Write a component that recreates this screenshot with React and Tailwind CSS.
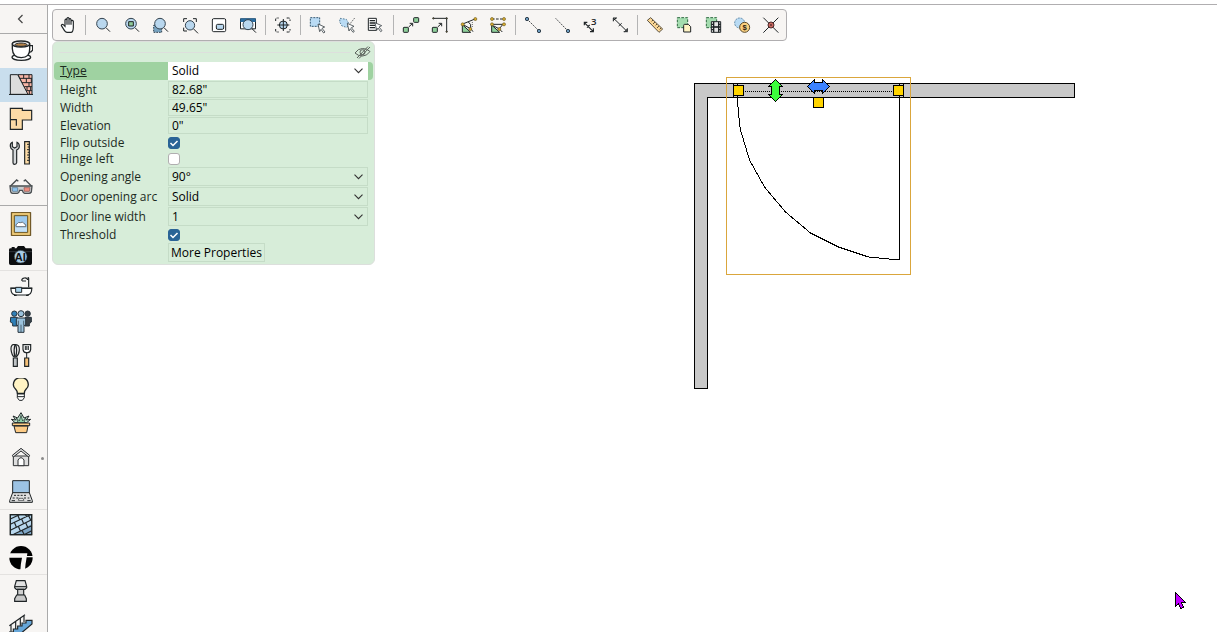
import React from "react";

const INK = "#1f2426";

/* ---------- sidebar icons ---------- */

const sideGroups = [
  [
    {
      name: "Basic", box: "27 117 72 72",
      art: (
        <g stroke={INK} strokeWidth="4" fill="#fff">
          <ellipse cx="64" cy="172" rx="28" ry="9" />
          <path d="M88 137h10v13q-3 7-13 7" fill="none" />
          <path d="M37 132v14q1 27 27 27t25-27v-14z" />
          <ellipse cx="63" cy="132" rx="26" ry="9" />
          <ellipse cx="63" cy="134" rx="18" ry="5" fill="#b5834a" strokeWidth="3" />
        </g>
      ),
    },
    {
      name: "Walls", box: "27 219 72 72", active: true,
      art: (
        <g stroke={INK} strokeWidth="3">
          <path d="M54 224h42v59H82z" fill="#f7b5a6" />
          <path d="M31 224h22l31 59H31z" fill="#dcdcdc" />
          <path d="M59 235h37M66 248h30M73 260h23M79 272h17M71 224v11M87 224v11M79 235v13M94 235v13M87 248v12M81 260v12M92 260v12M88 272v11" fill="none" />
          <path d="M27 283.500h72" />
        </g>
      ),
    },
    {
      name: "Rooms", box: "27 321 72 72",
      art: (
        <g stroke={INK} strokeWidth="3.500" fill="#fddba6">
          <path d="M31 325h36v6h28v29H67v28H31z" />
          <path d="M31 359h18v18" fill="none" />
        </g>
      ),
    },
    {
      name: "Tools", box: "27 423 72 72",
      art: (
        <g stroke={INK} strokeWidth="3.500">
          <path d="M37 427q-7 3-6 12 1 8 8 11v38q0 5 5 5t6-5v-38q8-3 8-11 0-9-7-12v13l-7 4-7-4z" fill="#d5d8da" />
          <path d="M74 425h14v67H74z" fill="#fddba6" />
          <path d="M81 433h7M83 441h5M81 449h7M83 457h5M81 465h7M83 473h5M81 481h7" strokeWidth="3" />
        </g>
      ),
    },
    {
      name: "3D view", box: "27 525 72 72",
      art: (
        <g stroke="#4a4f52" strokeWidth="4" fill="none">
          <path d="M31 559l19-19 5 4M95 559l-19-19-5 4" />
          <path d="M30 558h66l-2 18q-3 4-7 4H74q-5-1-7-9h-8q-2 8-7 9H38q-5 0-6-5z" fill="#c9ccce" />
          <path d="M36 563h17v11H38z" fill="#8fc4ef" stroke="#4f7089" strokeWidth="2" />
          <path d="M72 563h18l-2 11H73z" fill="#ef8d80" stroke="#89504a" strokeWidth="2" />
        </g>
      ),
    },
  ],
  [
    {
      name: "Pictures", box: "27 36 72 72",
      art: (
        <g>
          <path d="M34 37h58v70H34z" fill="#d9b05a" stroke="#5d4515" strokeWidth="3" />
          <path d="M39 42h48v60H39z" fill="none" stroke="#f2d58b" strokeWidth="3" />
          <path d="M43 47h40v50H43z" fill="#9cc9ee" stroke="#6d551f" strokeWidth="3" />
          <path d="M45 82h36v13H45z" fill="#c5e1f6" />
          <path d="M49 80q-4-7 3-9 3-6 9-3 8-5 11 3 8 2 5 9z" fill="#fff" stroke="#4d565e" strokeWidth="2.500" />
        </g>
      ),
    },
    {
      name: "AI render", box: "27 129 72 72", short: true,
      art: (
        <g>
          <path d="M27 149q0-4 5-4h3v-4h9v4h5l5-7h18l5 7h15q4 0 4 4v41q0 5-5 5H32q-5 0-5-5z" fill="#0c0e10" />
          <path d="M27 155h69" stroke="#44494d" strokeWidth="2" />
          <circle cx="62" cy="170" r="19" fill="#a9cde6" stroke="#3a4249" strokeWidth="2" />
          <text x="61" y="182" textAnchor="middle" fontSize="33" fontWeight="700" fill="#101214" className="font-['Liberation_Sans',sans-serif]">AI</text>
        </g>
      ),
    },
  ],
  [
    {
      name: "Bathroom", box: "27 228 72 72",
      art: (
        <g stroke={INK} strokeWidth="3.500" fill="none">
          <path d="M65 242q0-7 8-8 9-1 10 6M66 243h12M86 262V236q0-4-3-3" />
          <path d="M33 265h62v5q-1 14-14 15H47q-13-1-14-15z" fill="#fff" />
          <path d="M31 264.500h66M42 286h8M78 286h8" />
          <path d="M47 262h18v15H47z" fill="#a9d3ea" strokeWidth="3" />
        </g>
      ),
    },
    {
      name: "People", box: "27 330 72 72",
      art: (
        <g strokeWidth="3" stroke="#27333c">
          <circle cx="43" cy="341" r="8" fill="#2f80b8" />
          <path d="M32 352h20v26H38v-8l-7-4z" fill="#2f80b8" />
          <circle cx="83" cy="341" r="8" fill="#3a4147" />
          <path d="M75 352h19v14l-6 5v7H75z" fill="#3a4147" />
          <circle cx="63" cy="341" r="9" fill="#9bc2dc" />
          <path d="M52 354h22l3 3v19h-5v21H54v-21h-5v-19z" fill="#9bc2dc" />
          <path d="M63 374v22M55 362v14M71 362v14" strokeWidth="2" />
        </g>
      ),
    },
    {
      name: "Kitchen", box: "27 432 72 72",
      art: (
        <g stroke={INK} strokeWidth="3.500" fill="none">
          <path d="M46 434q-14-3-13 14 2 18 10 23h5q9-7 10-20 1-18-12-17z" fill="#eceaea" />
          <path d="M45 434q-5 16-1 36M47 434q6 16 0 36" />
          <path d="M40 474h12v25H40z" fill="#bfc3c6" />
          <path d="M69 434h23v14q-1 9-9 10h-5q-8-1-9-10z" fill="#fff" />
          <path d="M76 438v12M80.500 438v12M85 438v12M80 459v15" strokeWidth="3" />
          <path d="M74 474h12v25H74z" fill="#f6c078" />
        </g>
      ),
    },
    {
      name: "Lighting", box: "27 534 72 72",
      art: (
        <g stroke={INK} strokeWidth="4" fill="#fff3c4">
          <path d="M52 580q0-7-5-12-7-7-7-14 1-20 23-21 21 1 22 21 0 7-7 14-5 5-5 12z" />
          <path d="M52 582h21v11l-6 8h-9l-6-8zM52 590h21" fill="#fff" strokeWidth="3" />
        </g>
      ),
    },
    {
      name: "Plants", box: "27 6 72 72",
      art: (
        <g stroke={INK} strokeWidth="3">
          <path d="M45 38L34 28l13 2-8-12 14 6 10-16 9 16 15-6-8 12 13-2-12 10z" fill="#c3e8d3" />
          <path d="M54 38l-5-14 9 9 5-17 5 17 9-9-5 14z" fill="#8ed0a8" strokeWidth="2" />
          <path d="M37 39h52v8H37zM42 48h42l-4 20H47z" fill="#fdcb85" />
        </g>
      ),
    },
    {
      name: "Building", box: "27 108 72 72", dot: true,
      art: (
        <g stroke="#2c2f31" strokeWidth="3" fill="#dedede">
          <path d="M40 138h46v29H40z" />
          <path d="M37 136l26-21 26 21-3 5-23-18-23 18z" />
          <path d="M54 167v-17q9-14 18 0v17z" fill="#fff" />
        </g>
      ),
    },
    {
      name: "Electronics", box: "27 210 72 72",
      art: (
        <g stroke={INK} strokeWidth="3">
          <path d="M38 212h50v38H38z" fill="#9cc3e4" />
          <path d="M38 248h50l9 24v5H29v-5z" fill="#dfdfdf" />
          <path d="M42 256h6M52 256h6M62 256h6M72 256h6M38 264h6M49 264h6M72 264h6M83 264h5M35 272h10M82 272h10" strokeWidth="3" />
          <path d="M55 271l2-6h12l3 6z" fill="#fff" strokeWidth="2" />
        </g>
      ),
    },
  ],
  [
    {
      name: "Materials", box: "27 312 72 72",
      art: (
        <g stroke={INK} strokeWidth="3.500">
          <path d="M31 314h64v60H31z" fill="#b9d8ee" />
          <path d="M42 374l53-32v32z" fill="#7fa6c6" stroke="none" />
          <path d="M31 327l27-13M31 343l60-29M31 361l64-32M41 373l54-26M72 374l23-12M54 317l5 12M76 314l4 5M43 337l6 14M65 327l6 14M86 317l6 13M55 349l6 14M77 338l6 14M66 361l6 12" fill="none" />
          <path d="M31 314h64v60H31z" fill="none" />
        </g>
      ),
    },
    {
      name: "Trimble", box: "27 407 72 72",
      art: (
        <g>
          <circle cx="63" cy="442" r="35" fill="#000" />
          <path d="M26 429h56l-1 8h19v4H80q-4 20-5 39H61q1-20 5-38H26z" fill="#f7f5f3" />
        </g>
      ),
    },
  ],
  [
    {
      name: "Columns", box: "27 510 72 72",
      art: (
        <g stroke={INK} strokeWidth="3.500" fill="#e1e1e1">
          <path d="M49 512h26l5 17v4l-5 5H49l-5-5v-4z" />
          <path d="M45 530h34" />
          <path d="M53 538h18v18H53z" fill="#d0d0d0" />
          <path d="M50 555h24l5 11v8H44v-8z" fill="#c8c8c8" />
        </g>
      ),
    },
    {
      name: "Stairs", box: "27 612 72 72",
      art: (
        <g stroke={INK} strokeWidth="3.500" fill="none">
          <path d="M28 666h12v-9h13v-9h13v-9h12v-8h18v11l-38 32H28z" fill="#66a6d8" />
          <path d="M28 647l47-33M33 644v21M47 634v23M61 624v23M72 616v20" />
        </g>
      ),
    },
  ],
];

/* ---------- toolbar icons ---------- */

const lens = (cx, cy, r = 15) => (
  <g>
    <path d={`M${cx + r - 4} ${cy + r - 4}L${cx + 24} ${cy + 24}`} stroke={INK} strokeWidth="3" />
    <circle cx={cx} cy={cy} r={r} fill="#b9d7ee" stroke="#34434f" strokeWidth="3" />
  </g>
);

const arrow = (x, y) => (
  <path
    d={`M${x} ${y}l20 9-8 4 9 11-4 3-8-11-4 7z`}
    fill="#fff" stroke="#3c4449" strokeWidth="2.500"
  />
);

const gold = (x, y) => <circle cx={x} cy={y} r="4.500" fill="#dcae2c" stroke="#6b5a24" strokeWidth="2" />;
const blueDot = (x, y) => <circle cx={x} cy={y} r="5" fill="#6d9cc0" stroke="#33424e" strokeWidth="3" />;

const toolGroups = [
  [
    {
      name: "Pan", box: "18 39 75 75",
      art: (
        <path
          d="M43 91q-5-8-9-14 1-6 6-3l5 5V60q3-5 6 0v-5q3-5 6 0v3q4-5 6 1v4q4-4 7 1v19q-1 14-7 14H51q-5-1-8-6zM51 60v14M57 58v16M63 60v14"
          fill="#fff" stroke={INK} strokeWidth="3.500"
        />
      ),
    },
  ],
  [
    { name: "Zoom", box: "123 39 75 75", art: lens(156, 71, 16) },
    {
      name: "Zoom to object", box: "210 39 75 75",
      art: <g>{lens(243, 71, 16)}<path d="M236 65h14v13h-14z" fill="#8fca98" stroke={INK} strokeWidth="3" /></g>,
    },
    {
      name: "Zoom area", box: "297 39 75 75",
      art: <g><path d="M311 76h24v21h-24z" fill="#78a3c0" stroke="#34434f" strokeWidth="3" strokeDasharray="5 3" />{lens(330, 71, 16)}</g>,
    },
    {
      name: "Fit view", box: "384 39 75 75",
      art: (
        <g>
          <path d="M401 66V56h10M429 56h10v10M401 83v10h10" fill="none" stroke={INK} strokeWidth="3" />
          {lens(420, 76, 14)}
        </g>
      ),
    },
    {
      name: "Mini map", box: "471 39 75 75",
      art: (
        <g stroke={INK} strokeWidth="3">
          <rect x="487" y="56" width="40" height="39" rx="4" fill="#fff" />
          <rect x="499" y="73" width="22" height="15" rx="4" fill="#b9d7ee" />
        </g>
      ),
    },
    {
      name: "Preview", box: "558 39 75 75",
      art: (
        <g>
          <path d="M571.500 56.500h45v30h-45z" fill="#fff" stroke={INK} strokeWidth="3" />
          <path d="M571 55h46v11h-46z" fill="#2c6da0" />
          {lens(594, 74, 15)}
        </g>
      ),
    },
  ],
  [
    {
      name: "Center", box: "663 39 75 75",
      art: (
        <g fill="none" stroke={INK} strokeWidth="3">
          <path d="M677 63v-6q1-3 4-3h5M710 54h6q4 0 4 4v5M677 87v6q1 3 4 3h5M710 96h6q4 0 4-4v-5" strokeDasharray="9 3" />
          <circle cx="700" cy="75" r="12" fill="#b9d7ee" />
          <path d="M700 57v36M682 75h36" />
        </g>
      ),
    },
  ],
  [
    {
      name: "Select rectangle", box: "48 39 75 75",
      art: <g><path d="M61 53h28v26H61z" fill="#b9dbf4" stroke="#345a75" strokeWidth="3" strokeDasharray="6 3" />{arrow(84, 72)}</g>,
    },
    {
      name: "Select lasso", box: "135 39 75 75",
      art: (
        <g>
          <path d="M150 55l19 3 10 17-9 7-14-4-7-12z" fill="#b9dbf4" stroke="#5c8199" strokeWidth="3" strokeDasharray="5 4" />
          <path d="M194 54l-20 25" stroke={INK} strokeWidth="2" strokeDasharray="5 3" />
          {arrow(172, 70)}
        </g>
      ),
    },
    {
      name: "Select from list", box: "222 39 75 75",
      art: (
        <g>
          <path d="M235 55h24v36h-24z" fill="#fff" stroke={INK} strokeWidth="3" />
          <path d="M239 62h16M239 69h16M239 76h16M239 83h16" stroke={INK} strokeWidth="4" />
          {arrow(255, 68)}
        </g>
      ),
    },
  ],
  [
    {
      name: "Move to point", box: "327 39 75 75",
      art: (
        <g stroke={INK} strokeWidth="3" fill="#8fd09b">
          <rect x="340" y="82" width="15" height="15" rx="2" />
          <rect x="371" y="53" width="15" height="14" rx="2" />
          <path d="M356 81l11-10M359 70h9v9" fill="none" />
        </g>
      ),
    },
    {
      name: "Move to line", box: "414 39 75 75",
      art: (
        <g stroke={INK} strokeWidth="3" fill="#8fd09b">
          <path d="M430 55h40v40M443 81l11-10M446 70h9v9" fill="none" />
          <rect x="427" y="82" width="15" height="15" rx="2" />
          <circle cx="430" cy="55" r="2" fill="#e0b43c" /><circle cx="470" cy="55" r="2" fill="#e0b43c" /><circle cx="470" cy="95" r="2" fill="#e0b43c" />
        </g>
      ),
    },
    {
      name: "Rotate", box: "501 39 75 75",
      art: (
        <g>
          <path d="M517 74v23h25z" fill="#8fd09b" stroke={INK} strokeWidth="3" />
          <path d="M518 72l37-15M518 73l25 14 6 8M535 66q10 6 7 18" fill="none" stroke={INK} strokeWidth="3" />
          <path d="M547 66v16" stroke={INK} strokeWidth="2" strokeDasharray="3 3" />
          {gold(518, 73)}{gold(556, 57)}{gold(541, 87)}
        </g>
      ),
    },
    {
      name: "Scale", box: "588 39 75 75",
      art: (
        <g>
          <path d="M605 75v22h24z" fill="#8fd09b" stroke={INK} strokeWidth="3" />
          <path d="M606 57h34" stroke={INK} strokeWidth="3" strokeDasharray="8 4" />
          <path d="M606 73h34M610 77l18 10 9 9M628 86l10-12" fill="none" stroke={INK} strokeWidth="3" />
          {gold(606, 57)}{gold(642, 57)}{gold(606, 73)}{gold(642, 73)}{gold(628, 87)}
        </g>
      ),
    },
  ],
  [
    {
      name: "Point pair", box: "693 39 75 75",
      art: <g><path d="M711 57l36 36" stroke={INK} strokeWidth="2.500" strokeDasharray="5 3" />{blueDot(711, 57)}{blueDot(747, 93)}</g>,
    },
    {
      name: "End point", box: "60 39 75 75",
      art: <g><path d="M77 55l37 38" stroke={INK} strokeWidth="2.500" strokeDasharray="5 3" />{blueDot(114, 93)}</g>,
    },
    {
      name: "Divide", box: "147 39 75 75",
      art: (
        <g fill="none" stroke={INK} strokeWidth="3.500">
          <path d="M163 68l27 27M172 67h-9v9M190 85v10h-10M171 83l8-8" />
          <text x="183" y="75" fontSize="29" fill={INK} stroke="none" className="font-['Open_Sans',sans-serif] font-semibold">3</text>
        </g>
      ),
    },
    {
      name: "Distance", box: "234 39 75 75",
      art: <path d="M250 54l42 41M261 54h-11v10M292 85v10h-11M266 78l9-8M250 62l8-8M284 95l8-8" fill="none" stroke={INK} strokeWidth="3" />,
    },
  ],
  [
    {
      name: "Measure", box: "339 39 75 75",
      art: (
        <g stroke="#3d3524" strokeWidth="2.500">
          <path d="M352 61l10-8 36 34-11 10z" fill="#fbd694" />
          <path d="M369 60l-4 4M375 66l-6 6M381 72l-4 4M387 78l-6 6M393 84l-4 4" />
        </g>
      ),
    },
    {
      name: "Group copy", box: "426 39 75 75",
      art: (
        <g stroke={INK} strokeWidth="3">
          <path d="M442 53h31v30h-31z" fill="#a3dcae" strokeDasharray="8 4" stroke="#2f6a40" />
          <path d="M461 76q0-3 3-3h11l7 7v16h-21z" fill="#fff4c4" />
        </g>
      ),
    },
    {
      name: "Group film", box: "513 39 75 75",
      art: (
        <g stroke={INK} strokeWidth="3">
          <path d="M529 53h31v30h-31z" fill="#a3dcae" strokeDasharray="8 4" stroke="#2f6a40" />
          <path d="M544 65h28v32h-28z" fill="#e6e6e6" />
          <path d="M551 65v32M566 65v32M544 73h7M544 81h7M544 89h7M566 73h6M566 81h6M566 89h6" strokeWidth="4" />
          <path d="M551 81h15" strokeWidth="5" />
        </g>
      ),
    },
    {
      name: "Cost", box: "600 39 75 75",
      art: (
        <g>
          <circle cx="629" cy="69" r="15" fill="#b9dbf4" stroke="#5f89a8" strokeWidth="3" strokeDasharray="6 3" />
          <circle cx="644" cy="82" r="15" fill="#fbd07f" stroke="#5a4a2a" strokeWidth="3" />
          <text x="644" y="90" textAnchor="middle" fontSize="23" fontWeight="700" fill="#2a2314" className="font-['Liberation_Sans',sans-serif]">$</text>
        </g>
      ),
    },
    {
      name: "Clear", box: "687 39 75 75",
      art: (
        <g>
          <path d="M700 53l45 45M745 53l-45 45" stroke={INK} strokeWidth="3" />
          <circle cx="723" cy="75" r="9" fill="#cf6a62" stroke="#4a2a2a" strokeWidth="3" />
          <path d="M719 71l8 8M727 71l-8 8" stroke="#4a2a2a" strokeWidth="2" />
        </g>
      ),
    },
  ],
];

function Sidebar() {
  return (
    <aside className="flex w-12 shrink-0 flex-col overflow-hidden border-r border-[#aaaaaa] bg-[#f7f5f3]">
      <button type="button" aria-label="Collapse" className="flex h-[29px] shrink-0 items-center border-b border-[#aaaaaa] pl-[17px]">
        <svg width="8" height="10" viewBox="0 0 8 10" fill="none" stroke="#444" strokeWidth="1.200"><path d="M5.500 1L1.500 5l4 4" /></svg>
      </button>
      {sideGroups.map((group, g) => (
        <nav
          key={g}
          className={
            g === 0 ? "shrink-0 pb-px"
              : g === 1 ? "shrink-0 border-t border-[#aaaaaa] pt-0.5"
              : "shrink-0 border-t border-[#e4e2e0]"
          }
        >
          {group.map((it) => (
            <button
              key={it.name}
              type="button"
              aria-label={it.name}
              className={`flex w-full items-center pl-[9px] ${it.short ? "h-[30px]" : g === 1 || g === 3 ? "h-8" : "h-[34px]"} ${it.active ? "bg-[#c9deed]" : ""}`}
            >
              <svg width="24" height="24" viewBox={it.box}>{it.art}</svg>
              {it.dot && <span className="ml-2 size-[3px] rounded-full bg-[#8a8a8a]" />}
            </button>
          ))}
        </nav>
      ))}
    </aside>
  );
}

function Toolbar() {
  return (
    <div role="toolbar" className="flex h-8 w-max items-center rounded-[4px] border border-[#b0aeb0] bg-[#f7f5f3] pl-px">
      {toolGroups.map((group, g) => (
        <React.Fragment key={g}>
          {g > 0 && <div className="ml-0.5 mr-[3px] h-5 w-px bg-[#b4b4b4]" />}
          {group.map((it) => (
            <button key={it.name} type="button" aria-label={it.name} className="flex w-[29px] justify-center">
              <svg width="25" height="25" viewBox={it.box}>{it.art}</svg>
            </button>
          ))}
        </React.Fragment>
      ))}
    </div>
  );
}

const field = "border border-[#c5dcc7] bg-transparent pl-[3px] text-black outline-none";

function Row({ id, label, className, children }) {
  return (
    <div className={`flex items-center pl-1.5 ${className}`}>
      <label htmlFor={id} className="w-[108px] shrink-0 whitespace-nowrap">{label}</label>
      {children}
    </div>
  );
}

function TextRow({ id, label, value }) {
  return (
    <Row id={id} label={label} className="h-[18px]">
      <input id={id} defaultValue={value} className={`h-[17px] w-[200px] self-start ${field}`} />
    </Row>
  );
}

function Select({ id, value, className }) {
  return (
    <div className="relative flex w-[200px] self-start">
      <select id={id} defaultValue={value} className={`w-full appearance-none ${className}`}>
        <option>{value}</option>
      </select>
      <svg className="pointer-events-none absolute right-[5px] top-1/2 -translate-y-1/2" width="9" height="6" viewBox="0 0 9 6" fill="none" stroke="#333" strokeWidth="1.100">
        <path d="M0.500 0.700l4 4 4-4" />
      </svg>
    </div>
  );
}

function CheckRow({ id, label, checked }) {
  return (
    <Row id={id} label={label} className="h-4">
      <span className="relative flex">
        <input
          id={id}
          type="checkbox"
          defaultChecked={checked}
          className="peer size-3 appearance-none rounded-[3px] border border-[#b0aeb0] bg-white checked:border-[#2a6496] checked:bg-[#2a6496]"
        />
        <svg className="pointer-events-none absolute inset-0 hidden peer-checked:block" width="12" height="12" viewBox="0 0 12 12" fill="none" stroke="#fff" strokeWidth="1.500">
          <path d="M2.500 6l2.500 2.500L9.500 4" />
        </svg>
      </span>
    </Row>
  );
}

function Properties() {
  return (
    <form className="w-[323px] rounded-md border border-[#dcdfdc] bg-[#d7edd9] px-px pb-0.5 text-xs text-[#1d2b1f]">
      <div className="flex h-5 items-center pl-[5px] pr-0.5">
        <div className="h-px flex-1 bg-[#dddfdd]" />
        <button type="button" aria-label="Hide" className="ml-1">
          <svg width="17" height="15" viewBox="0 0 17 15" fill="none" stroke="#5a615b" strokeWidth="1">
            <path d="M1 8Q4 3.500 8.500 3.500T16 6.500Q13 11 8.500 11T1 8zM3 13L14 1.500M5 13.500L16 2" />
            <circle cx="8.500" cy="7.200" r="2.500" />
          </svg>
        </button>
      </div>
      <Row
        id="type"
        label={<span className="underline">Type</span>}
        className="h-[18px] rounded bg-[#9fd2a1]"
      >
        <Select id="type" value="Solid" className="h-[18px] bg-white pl-1 text-black outline-none" />
      </Row>
      <div className="pt-px">
        <TextRow id="height" label="Height" value={'82.68"'} />
        <TextRow id="width" label="Width" value={'49.65"'} />
        <TextRow id="elevation" label="Elevation" value={'0"'} />
        <CheckRow id="flip" label="Flip outside" checked />
        <CheckRow id="hinge" label="Hinge left" />
        <Row id="angle" label="Opening angle" className="h-5">
          <Select id="angle" value="90°" className={`h-[19px] ${field}`} />
        </Row>
        <Row id="arc" label="Door opening arc" className="h-5">
          <Select id="arc" value="Solid" className={`h-[19px] ${field}`} />
        </Row>
        <Row id="line" label="Door line width" className="h-5">
          <Select id="line" value="1" className={`h-[19px] ${field}`} />
        </Row>
        <CheckRow id="threshold" label="Threshold" checked />
      </div>
      <button type="button" className="ml-[114px] flex h-[19px] items-center whitespace-nowrap border border-[#c5dcc7] px-0.5 text-black">
        More Properties
      </button>
    </form>
  );
}

function Plan() {
  return (
    <svg className="absolute left-[642px] top-[69px]" width="390" height="320" viewBox="690 74 390 320" shapeRendering="crispEdges" role="img" aria-label="Floor plan">
      <path d="M694.500 83.500H1074.500V97.500H707.500V388.500H694.500z" fill="#c8c8c8" stroke="#000" />
      <g fill="none" stroke="#000">
        <path d="M733.500 83v14M737.500 83v14M899.500 83v14M903.500 83v14" />
        <path d="M745 91.500H893" strokeDasharray="1 1" />
        <path d="M737.500 97v4l2 22 1 7 9 30 15 27 21 25 25 21 28 14 30 10 31 3V97" />
      </g>
      <path d="M726.500 77.500h184v197h-184z" fill="none" stroke="#daa63c" />
      <g fill="#ffd400" stroke="#000">
        <path d="M733.500 85.500h10v10h-10zM893.500 85.500h10v10h-10zM813.500 97.500h10v10h-10z" />
      </g>
      <g stroke="#000">
        <path d="M775.500 79.500l7 7h-3v8h3l-7 7-7-7h3v-8h-3z" fill="#3cff3c" />
        <path d="M807.500 86.500l7-7v3h8v-3l7 7-7 7v-3h-8v3z" fill="#3c82ff" />
      </g>
    </svg>
  );
}

export default function App() {
  return (
    <div className="flex h-screen flex-col overflow-hidden bg-white pt-1 font-['Open_Sans','Noto_Sans',sans-serif]">
      <div className="h-px shrink-0 bg-[#b0aeb0]" />
      <div className="flex min-h-0 flex-1">
        <Sidebar />
        <main className="relative flex-1 overflow-hidden pl-1 pt-1">
          <Toolbar />
          <Properties />
          <Plan />
          <svg className="absolute left-[1126px] top-[586px]" width="14" height="20" viewBox="0 0 14 20" shapeRendering="crispEdges" aria-hidden="true">
            <path d="M1.500 1.500v14l3-3 2 5 3-1-2-5h4z" fill="#c000ff" stroke="#000" />
          </svg>
        </main>
      </div>
    </div>
  );
}
